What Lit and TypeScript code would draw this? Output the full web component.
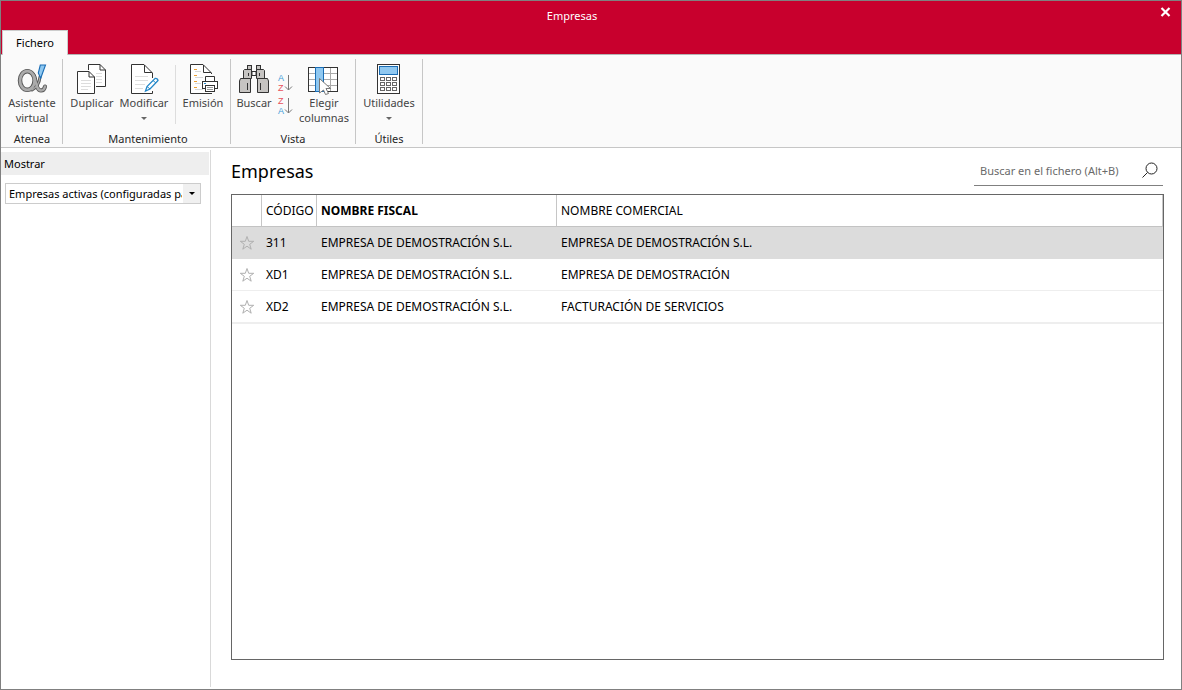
import { LitElement, html, css, svg } from "lit";
import { customElement, property, state } from "lit/decorators.js";
import { classMap } from "lit/directives/class-map.js";

const FONT = css`"Noto Sans", "Open Sans", sans-serif`;

const icons: Record<string, unknown> = {
  alpha: svg`
    <g fill="none" stroke-linecap="round" stroke-linejoin="round">
      <g stroke="#555">
        <ellipse cx="11.300" cy="17.500" rx="7.300" ry="9.300" stroke-width="4.500"/>
        <path d="M24 14C23.500 19 21 24 16 27" stroke-width="3"/>
        <path d="M17.500 12C20 15 19.500 27.500 25 27.500C27.500 27.500 28.500 26 29 23.500" stroke-width="4"/>
      </g>
      <g stroke="#ababab">
        <ellipse cx="11.300" cy="17.500" rx="7.300" ry="9.300" stroke-width="2.700"/>
        <path d="M24 14C23.500 19 21 24 16 27" stroke-width="1.300"/>
        <path d="M17.500 12C20 15 19.500 27.500 25 27.500C27.500 27.500 28.500 26 29 23.500" stroke-width="2.300"/>
      </g>
    </g>
    <path d="M24.300 2H29.500L24.700 15.300L22.300 10Z" fill="#8fc8f0" stroke="#1a6db5" stroke-width="1.100"/>`,
  duplicate: svg`
    <path d="M12.500 7V1.500H24L29.500 7V23.500H20" fill="#fff" stroke="#333"/>
    <path d="M24 1.500V7H29.500" fill="none" stroke="#333"/>
    <path d="M20 10.500H26M20 13.500H26M20 16.500H26M20 19.500H26" stroke="#ddd"/>
    <path d="M1.500 8.500H13L18.500 14V30.500H1.500Z" fill="#fff" stroke="#333"/>
    <path d="M13 8.500V14H18.500" fill="none" stroke="#333"/>
    <path d="M5 17.500H15M5 20.500H15M5 23.500H15M5 26.500H12" stroke="#ddd"/>`,
  edit: svg`
    <path d="M24.500 15V10L16 1.500H3.500V30.500H24.500V28" fill="#fff" stroke="#333"/>
    <path d="M16.500 2V9.500H24" fill="none" stroke="#333"/>
    <path d="M7 13.500H20M7 17.500H20M7 21.500H17M7 25.500H15" stroke="#ddd"/>
    <path d="M17.500 28L19 23.500L27 15.500Q29.500 15 30 17.500L22 26Z" fill="#fff" stroke="#2488c9" stroke-width="1.300"/>
    <path d="M19 23.500L22 26M25 17.500L28 20" stroke="#2488c9"/>`,
  print: svg`
    <path d="M24.500 11V10L16 1.500H3.500V30.500H25" fill="#fff" stroke="#333"/>
    <path d="M16.500 2V9.500H24" fill="none" stroke="#333"/>
    <path d="M7 6.500H10M7 12.500H10M7 18.500H10M7 24.500H10" stroke="#eda034"/>
    <path d="M8 8.500H14M8 14.500H16M8 20.500H14M8 26.500H16" stroke="#d8d8d8"/>
    <path d="M18.500 18V13.500H27.500V18" fill="#fff" stroke="#333"/>
    <rect x="15.500" y="18.500" width="15" height="7" fill="#fff" stroke="#333"/>
    <rect x="18.500" y="22.500" width="9" height="6" fill="#fff" stroke="#333"/>
    <path d="M20 24.500H26M20 26.500H26" stroke="#999"/>
    <path d="M17 20.500H19" stroke="#2488c9"/>`,
  search: svg`
    <g fill="#c6c4c2" stroke="#333">
      <path d="M14 8.500H18V12.500H14Z" fill="#fff"/>
      <rect x="9.500" y="2.500" width="4" height="4"/><rect x="18.500" y="2.500" width="4" height="4"/>
      <path d="M6.500 6.500H13.500V15.500H5.500V7.500Z"/><path d="M18.500 6.500H25.500L26.500 7.500V15.500H18.500Z"/>
      <path d="M2.500 15.500H12.500V29.500H1.500V18Z"/><path d="M19.500 15.500H29.500L30.500 18V29.500H19.500Z"/>
      <path d="M9.500 20V27M22.500 20V27M10.500 10V13M21.500 10V13"/>
    </g>`,
  columns: svg`
    <rect x=".500" y="4.500" width="29" height="24" fill="#fff" stroke="#333"/>
    <path d="M1 10.500H29M1 16.500H29M1 22.500H29M22.500 5V28" stroke="#aaa"/>
    <rect x="7.500" y="4.500" width="8" height="24" fill="#90c8f0" stroke="#1a6db5"/>
    <path d="M11.500 15.500L22.500 25.500H18L20.500 30.500L17.500 31.500L15.500 27L11.500 30Z" fill="#fff" stroke="#777"/>`,
  calculator: svg`
    <rect x="4.500" y="1.500" width="22" height="29" fill="#fff" stroke="#333"/>
    <rect x="6.500" y="3.500" width="18" height="8" fill="#90c8f0" stroke="#1a6db5"/>
    <g fill="#fff" stroke="#666">
      ${[14.5, 19.5, 24.5].map((y) =>
        [7.5, 13.5, 19.5].map(
          (x) => svg`<rect x=${x} y=${y} width="4" height="3"/>`,
        ),
      )}
    </g>`,
};

@customElement("ribbon-button")
class RibbonButton extends LitElement {
  @property() icon = "";
  @property({ type: Array }) lines: string[] = [];
  @property({ type: Boolean }) menu = false;

  static styles = css`
    :host {
      display: block;
    }
    .button {
      width: 100%;
      display: flex;
      flex-direction: column;
      align-items: center;
      border: 0;
      padding: 0;
      background: none;
      color: #444;
      font: 11px/15px ${FONT};
      white-space: nowrap;
    }
    .icon {
      display: block;
      width: 32px;
      height: 32px;
    }
    .arrow {
      margin-top: 7px;
      border: 3px solid transparent;
      border-top-color: #666;
      border-bottom: 0;
    }
  `;

  render() {
    return html`<button class="button" type="button">
      <svg class="icon" viewBox="0 0 32 32" aria-hidden="true">${icons[this.icon]}</svg>
      ${this.lines.map((l) => html`<span>${l}</span>`)}
      ${this.menu ? html`<span class="arrow"></span>` : ""}
    </button>`;
  }
}

interface Company {
  code: string;
  fiscal: string;
  trade: string;
}

@customElement("app-root")
class AppRoot extends LitElement {
  @state() private selected = "311";

  private companies: Company[] = [
    { code: "311", fiscal: "EMPRESA DE DEMOSTRACIÓN S.L.", trade: "EMPRESA DE DEMOSTRACIÓN S.L." },
    { code: "XD1", fiscal: "EMPRESA DE DEMOSTRACIÓN S.L.", trade: "EMPRESA DE DEMOSTRACIÓN" },
    { code: "XD2", fiscal: "EMPRESA DE DEMOSTRACIÓN S.L.", trade: "FACTURACIÓN DE SERVICIOS" },
  ];

  static styles = css`
    :host {
      display: flex;
      flex-direction: column;
      box-sizing: border-box;
      height: 100vh;
      border: 1px solid #808080;
      background: #fff;
      color: #000;
      font: 11px/15px ${FONT};
    }
    * {
      box-sizing: border-box;
    }
    button {
      font: inherit;
      color: inherit;
      border: 0;
      padding: 0;
      background: none;
    }
    .header {
      background: #c8002d;
      border-bottom: 1px solid #b4b4b4;
    }
    .titlebar {
      display: grid;
      grid-template-columns: 1fr 38px;
      height: 29px;
      color: #fff;
      text-align: center;
      line-height: 29px;
    }
    .title {
      margin: 0;
      font-size: 11px;
      font-weight: 400;
    }
    .close {
      display: flex;
      align-items: start;
      justify-content: end;
      padding: 6px 10px 0 0;
    }
    .tab {
      display: block;
      height: 25px;
      width: 66px;
      margin: 0 0 -1px 1px;
      border: 1px solid #ccc;
      border-bottom: 0;
      padding-bottom: 2px;
      background: #fafafa;
    }
    .ribbon {
      display: flex;
      padding: 4px 0;
      height: 93px;
      flex: none;
      background: #fafafa;
      border-bottom: 1px solid #c6c6c6;
    }
    .group {
      display: flex;
      flex-direction: column;
      justify-content: space-between;
      border-right: 1px solid #c6c6c6;
      padding-top: 4px;
      height: 85px;
    }
    .tools {
      display: flex;
    }
    .caption {
      text-align: center;
      color: #262626;
      line-height: 11px;
    }
    .w46 { width: 46px; }
    .w52 { width: 52px; }
    .w54 { width: 54px; }
    .w60 { width: 60px; }
    .w62 { width: 62px; }
    .w66 { width: 66px; }
    .atenea { padding-left: 1px; }
    .mant { padding-left: 3px; }
    .rule {
      width: 1px;
      height: 59px;
      margin: 2px 0 0 5px;
      background: #ddd;
    }
    .sorts {
      width: 16px;
      display: flex;
      flex-direction: column;
      gap: 3px;
      padding-top: 10px;
    }
    .sorts svg {
      display: block;
    }
    .letter {
      font: 9px "Liberation Sans", sans-serif;
    }
    .body {
      flex: 1;
      display: flex;
      min-height: 0;
      padding: 2px 0;
    }
    .side {
      width: 210px;
      flex: none;
      border-right: 1px solid #d9d9d9;
      padding: 2px 1px 0 0;
    }
    .show {
      display: block;
      height: 23px;
      line-height: 23px;
      padding-left: 3px;
      background: #eee;
    }
    .pick {
      display: grid;
      grid-template-columns: 1fr 17px;
      margin: 8px 8px 0 4px;
      height: 21px;
      border: 1px solid #ccc;
    }
    .select {
      grid-area: 1 / 1 / 2 / 3;
      appearance: none;
      width: 100%;
      border: 0;
      border-radius: 0;
      padding: 0 18px 0 3px;
      background: none;
      color: #000;
      font: inherit;
      outline: none;
    }
    .drop {
      grid-area: 1 / 2 / 2 / 3;
      display: flex;
      align-items: center;
      justify-content: center;
      background: #f0f0f0;
      pointer-events: none;
    }
    .drop::after {
      content: "";
      border: 3px solid transparent;
      border-top-color: #000;
      border-bottom: 0;
    }
    .main {
      flex: 1;
      min-width: 0;
      display: flex;
      flex-direction: column;
      padding: 5px 17px 27px 20px;
    }
    .top {
      display: flex;
      justify-content: space-between;
      align-items: start;
      padding-right: 1px;
      margin-bottom: 7px;
    }
    .heading {
      margin: 0;
      font-size: 18px;
      font-weight: 400;
      line-height: 32px;
    }
    .search {
      display: flex;
      align-items: center;
      width: 189px;
      height: 31px;
      border-bottom: 1px solid #808080;
    }
    .query {
      flex: 1;
      min-width: 0;
      border: 0;
      padding: 0 0 0 6px;
      background: none;
      font: inherit;
      outline: none;
    }
    .query::placeholder {
      color: #6a6a6a;
      opacity: 1;
    }
    .find {
      padding-right: 5px;
    }
    .find svg {
      display: block;
    }
    .frame {
      flex: 1;
      border: 1px solid #666;
    }
    .table {
      width: 100%;
      table-layout: fixed;
      border-collapse: separate;
      border-spacing: 0;
      font-size: 12px;
      border-bottom: 1px solid #eee;
    }
    .table th,
    .table td {
      height: 32px;
      padding: 0 4px;
      text-align: left;
      font-weight: 400;
      border-bottom: 1px solid #eee;
      white-space: nowrap;
    }
    .table th {
      border-bottom-color: #c3c3c3;
      border-right: 1px solid #c6c6c6;
    }
    .table .sorted {
      font-weight: 700;
    }
    .selected td {
      background: #dcdcdc;
      border-bottom-color: #dcdcdc;
    }
    .c-star { width: 30px; }
    .c-code { width: 55px; }
    .c-fiscal { width: 240px; }
    .star {
      display: block;
      margin-left: 3px;
    }
  `;

  private sortButton(first: string, second: string, c1: string, c2: string, label: string) {
    return html`<button type="button" aria-label=${label}>
      <svg width="16" height="20" viewBox="0 0 16 20">
        <text class="letter" x="1" y="8" fill=${c1}>${first}</text>
        <text class="letter" x="1" y="18" fill=${c2}>${second}</text>
        <path d="M11.500 2V17M8 13.500L11.500 17L15 13.500" fill="none" stroke="#777" />
      </svg>
    </button>`;
  }

  render() {
    const blue = "#3f9bd8";
    const red = "#e8505b";
    return html`
      <header class="header">
        <div class="titlebar">
          <h1 class="title">Empresas</h1>
          <button class="close" type="button" aria-label="Cerrar">
            <svg width="11" height="10" viewBox="0 0 11 10">
              <path d="M1.500 1L9.500 9M9.500 1L1.500 9" stroke="#fff" stroke-width="2.200" />
            </svg>
          </button>
        </div>
        <button class="tab" type="button">Fichero</button>
      </header>

      <nav class="ribbon">
        <div class="group atenea">
          <div class="tools">
            <ribbon-button class="w60" icon="alpha" .lines=${["Asistente", "virtual"]}></ribbon-button>
          </div>
          <div class="caption">Atenea</div>
        </div>
        <div class="group mant">
          <div class="tools">
            <ribbon-button class="w52" icon="duplicate" .lines=${["Duplicar"]}></ribbon-button>
            <ribbon-button class="w52" icon="edit" .lines=${["Modificar"]} menu></ribbon-button>
            <span class="rule"></span>
            <ribbon-button class="w54" icon="print" .lines=${["Emisión"]}></ribbon-button>
          </div>
          <div class="caption">Mantenimiento</div>
        </div>
        <div class="group">
          <div class="tools">
            <ribbon-button class="w46" icon="search" .lines=${["Buscar"]}></ribbon-button>
            <div class="sorts">
              ${this.sortButton("A", "Z", blue, red, "Orden ascendente")}
              ${this.sortButton("Z", "A", red, blue, "Orden descendente")}
            </div>
            <ribbon-button class="w62" icon="columns" .lines=${["Elegir", "columnas"]}></ribbon-button>
          </div>
          <div class="caption">Vista</div>
        </div>
        <div class="group">
          <div class="tools">
            <ribbon-button class="w66" icon="calculator" .lines=${["Utilidades"]} menu></ribbon-button>
          </div>
          <div class="caption">Útiles</div>
        </div>
      </nav>

      <div class="body">
        <aside class="side">
          <label class="show" for="filter">Mostrar</label>
          <div class="pick">
            <select class="select" id="filter">
              <option>Empresas activas (configuradas para trabajar)</option>
            </select>
            <span class="drop"></span>
          </div>
        </aside>
        <main class="main">
          <div class="top">
            <h2 class="heading">Empresas</h2>
            <div class="search">
              <input class="query" type="text" aria-label="Buscar en el fichero" placeholder="Buscar en el fichero (Alt+B)" />
              <button class="find" type="button" aria-label="Buscar">
                <svg width="16" height="16" viewBox="0 0 16 16" fill="none" stroke="#222">
                  <circle cx="9.500" cy="6.500" r="5.500" />
                  <path d="M5.500 10.500L.500 15.500" />
                </svg>
              </button>
            </div>
          </div>
          <div class="frame">
            <table class="table">
              <thead>
                <tr>
                  <th class="c-star"></th>
                  <th class="c-code">CÓDIGO</th>
                  <th class="c-fiscal sorted">NOMBRE FISCAL</th>
                  <th>NOMBRE COMERCIAL</th>
                </tr>
              </thead>
              <tbody>
                ${this.companies.map(
                  (c) => html`<tr
                    class=${classMap({ selected: c.code === this.selected })}
                    @click=${() => (this.selected = c.code)}
                  >
                    <td>
                      <svg class="star" width="16" height="16" viewBox="0 0 16 16">
                        <path
                          d="M8 1.500L9.700 6.300H14.700L10.700 9.300L12.200 14.200L8 11.200L3.800 14.200L5.300 9.300L1.300 6.300H6.300Z"
                          fill="none"
                          stroke="#b0b0b0"
                        />
                      </svg>
                    </td>
                    <td>${c.code}</td>
                    <td>${c.fiscal}</td>
                    <td>${c.trade}</td>
                  </tr>`,
                )}
              </tbody>
            </table>
          </div>
        </main>
      </div>
    `;
  }
}
